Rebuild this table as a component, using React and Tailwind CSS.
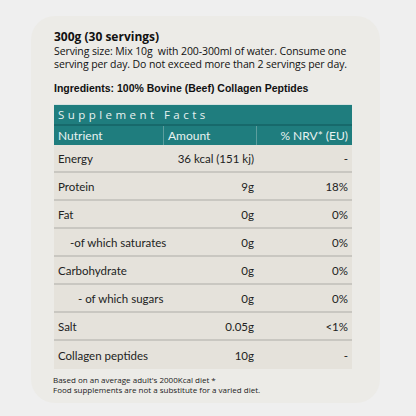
import React from 'react'

const rows = [
  { name: 'Energy', amount: '36 kcal (151 kj)', nrv: '-' },
  { name: 'Protein', amount: '9g', nrv: '18%' },
  { name: 'Fat', amount: '0g', nrv: '0%' },
  { name: '-of which saturates', amount: '0g', nrv: '0%', pad: 'pl-[16px]' },
  { name: 'Carbohydrate', amount: '0g', nrv: '0%' },
  { name: '- of which sugars', amount: '0g', nrv: '0%', pad: 'pl-[24px]' },
  { name: 'Salt', amount: '0.05g', nrv: '<1%' },
  { name: 'Collagen peptides', amount: '10g', nrv: '-' },
]

export default function App() {
  return (
    <div className="w-[416px] h-[416px] bg-[#efefef] pt-[16px] pl-[31px]">
      <div className="w-[349px] h-[387px] bg-[#ecebe7] rounded-[24px] pt-[14px] pl-[23px] text-[#111]">
        <div className="font-['Open_Sans',sans-serif] text-[10.5px] tracking-[-0.1px] leading-[13.5px] whitespace-nowrap">
          <div className="font-bold text-[12px] tracking-normal">300g (30 servings)</div>
          <div className="mt-[1px]">Serving size: Mix 10g&nbsp; with 200-300ml of water. Consume one</div>
          <div>serving per day. Do not exceed more than 2 servings per day.</div>
        </div>
        <div className="mt-[9px] font-['Liberation_Sans',Arial,sans-serif] font-bold text-[10.5px]">
          Ingredients: 100% Bovine (Beef) Collagen Peptides
        </div>
        <div className="mt-[8px] w-[298px] font-['Lato',sans-serif] text-[11.5px]">
          <div className="bg-[#1f7d7e] text-[#e8f2f1] border-t border-[#d6e2e0]">
            <div className="h-[21px] flex items-center pl-[4px] tracking-[0.3em] font-['Open_Sans',sans-serif] text-[11.5px] border-b-2 border-[#17696b]">
              Supplement Facts
            </div>
            <div className="h-[19px] flex items-center text-[12px]">
              <div className="w-[110px] pl-[4px] border-r border-[#5c9e9e] h-full flex items-center">Nutrient</div>
              <div className="w-[93px] pl-[4px] border-r border-[#5c9e9e] h-full flex items-center">Amount</div>
              <div className="flex-1 pr-[4px] text-right">% NRV* (EU)</div>
            </div>
          </div>
          <div className="bg-[#e5e2db] text-[#222]">
            {rows.map((r, i) => (
              <div
                key={r.name}
                className={
                  'h-[28px] flex items-center whitespace-nowrap ' +
                  (i < rows.length - 1 ? 'border-b-2 border-[#c9c7c1]' : '')
                }
              >
                <div className={'w-[110px] ' + (r.pad || 'pl-[4px]')}>{r.name}</div>
                <div className="w-[93px] pr-[3px] text-right">{r.amount}</div>
                <div className="flex-1 pr-[4px] text-right">{r.nrv}</div>
              </div>
            ))}
          </div>
        </div>
        <div className="mt-[6px] -ml-[1px] font-['Open_Sans',sans-serif] text-[8px] leading-[10px] text-[#222]">
          <div>Based on an average adult's 2000Kcal diet *</div>
          <div>Food supplements are not a substitute for a varied diet.</div>
        </div>
      </div>
    </div>
  )
}
